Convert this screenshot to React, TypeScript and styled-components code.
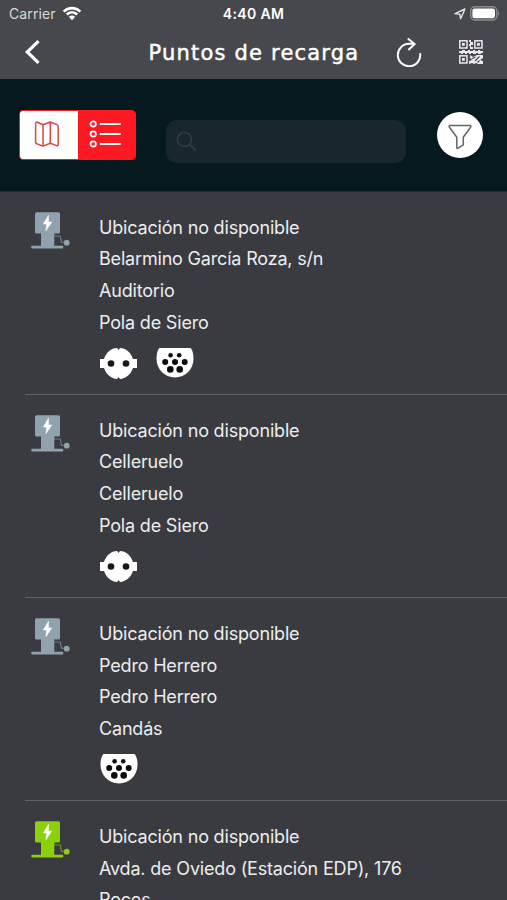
import React from 'react';
import styled, { createGlobalStyle } from 'styled-components';

const GlobalStyle = createGlobalStyle`
  * { box-sizing: border-box; }
  body { margin: 0; background: #3a3b40; }
  svg { display: block; flex: none; }
`;

const Screen = styled.div`
  width: 507px;
  height: 900px;
  overflow: hidden;
  display: flex;
  flex-direction: column;
  background: #3a3b40;
  color: #ededee;
  font-family: Inter, sans-serif;
`;

const StatusBar = styled.div`
  height: 27px;
  flex: none;
  display: grid;
  grid-template-columns: 1fr auto 1fr;
  align-items: center;
  padding: 0 7px 0 9px;
  background: #47484d;
  font-size: 14px;
`;

const StatusGroup = styled.div<{ $end?: boolean }>`
  display: flex;
  align-items: center;
  gap: ${(p) => (p.$end ? 4 : 6)}px;
  justify-content: ${(p) => (p.$end ? 'flex-end' : 'flex-start')};
`;

const Carrier = styled.span`
  color: #d9d9db;
  letter-spacing: 0.12px;
`;

const Clock = styled.span`
  color: #fff;
  font-weight: 600;
  margin-right: 2px;
  letter-spacing: 0.35px;
`;

const NavBar = styled.header`
  height: 52px;
  flex: none;
  display: flex;
  align-items: center;
  padding: 0 24px 2px;
  background: #47484d;
`;

const Title = styled.h1`
  margin: 2px 0 0 108.5px;
  width: 246.5px;
  font: 400 21px/50px "DejaVu Sans", sans-serif;
  letter-spacing: 1.2px;
  -webkit-text-stroke: 0.45px #fff;
  white-space: nowrap;
  color: #fff;
`;

const BarButton = styled.button<{ $w: number; $gap?: number }>`
  width: ${(p) => p.$w}px;
  margin-left: ${(p) => p.$gap ?? 0}px;
  padding: 0;
  border: 0;
  background: none;
  flex: none;
`;

const Toolbar = styled.div`
  height: 113px;
  flex: none;
  display: flex;
  align-items: center;
  padding: 0 24px 0 19px;
  background: #06191e;
  border-bottom: 1px solid #25292f;
`;

const Segments = styled.div`
  display: flex;
  width: 117px;
  height: 50px;
  margin-top: -1px;
  border: 1px solid #fc1a22;
  border-radius: 4px;
  overflow: hidden;
`;

const Segment = styled.button<{ $active?: boolean }>`
  width: 58px;
  padding: 0 3px 1px 0;
  border: 0;
  display: flex;
  align-items: center;
  justify-content: center;
  background: ${(p) => (p.$active ? '#fc1a22' : '#fff')};
`;

const SearchField = styled.div`
  width: 240px;
  height: 43px;
  margin: 12px 0 0 30px;
  padding-left: 10px;
  display: flex;
  align-items: center;
  border-radius: 11px;
  background: #17272d;
`;

const FilterButton = styled.button`
  width: 46px;
  height: 46px;
  margin-left: 31px;
  padding: 3px 0 0;
  border: 0;
  border-radius: 50%;
  background: #fff;
  display: flex;
  align-items: center;
  justify-content: center;
`;

const List = styled.ul`
  list-style: none;
  margin: 0;
  padding: 0 0 0 25px;
`;

const Item = styled.li`
  height: 203.1px;
  display: flex;
  border-bottom: 1px solid #606166;
  padding: 19px 0 0 6px;
`;

const Details = styled.div`
  padding: 0.6px 0 0 29px;
`;

const Line = styled.p`
  margin: 0;
  font-size: 18px;
  line-height: 31.8px;
  letter-spacing: -0.18px;
  white-space: nowrap;
`;

const Sockets = styled.div`
  display: flex;
  gap: 19px;
  padding: 8.4px 0 0 1px;
`;

const Wifi = () => (
  <svg width="20" height="16" viewBox="0 0 20 16" fill="none" stroke="#fff" strokeWidth="2.7">
    <path d="M1.7 5.6C6.4 .9 13.6 .9 18.3 5.6" />
    <path d="M4.8 8.6C8 5.6 12 5.6 15.2 8.6" />
    <path d="M6.8 10.8Q10 8.2 13.2 10.8L10 14.2Z" fill="#fff" stroke="none" />
  </svg>
);

const Location = () => (
  <svg width="12" height="12" viewBox="0 0 12 12" fill="none" stroke="#e2e2e4" strokeWidth="1.4" strokeLinejoin="round">
    <path d="M1 5.6L11 1L6.6 10.8L5.8 6.2Z" />
  </svg>
);

const Battery = () => (
  <svg width="30" height="15" viewBox="0 0 30 15">
    <rect x="0.8" y="0.8" width="26" height="13.2" rx="4" fill="none" stroke="#8b8c90" strokeWidth="1.4" />
    <rect x="2.4" y="2.5" width="22.6" height="9.8" rx="2.2" fill="#fff" />
    <path d="M28 5Q30.3 7.4 28 9.8Z" fill="#8b8c90" />
  </svg>
);

const Back = () => (
  <svg width="16" height="26" viewBox="0 0 16 26" fill="none" stroke="#fff" strokeWidth="3.2">
    <path d="M14.5 2.2L3.3 13L14.5 23.8" />
  </svg>
);

const Reload = () => (
  <svg width="28" height="30" viewBox="0 0 28 30" fill="none" stroke="#fff" strokeWidth="2">
    <path d="M25.1 16.2A11.2 11.2 0 1 1 14 6.8H19.2" />
    <path d="M12.8 1.5L19.6 7L13.4 13" />
  </svg>
);

const qrFinders = [[0, 0], [15, 0], [0, 15]];

const Qr = () => (
  <svg width="24" height="24" viewBox="0 0 24 24" fill="#e9e9ea">
    {qrFinders.map(([x, y]) => (
      <g key={`${x}-${y}`} transform={`translate(${x} ${y})`}>
        <rect x="0.8" y="0.8" width="7.2" height="7.2" fill="none" stroke="#e9e9ea" strokeWidth="1.5" />
        <rect x="3" y="3" width="2.8" height="2.8" />
      </g>
    ))}
    <path d="M10 0h2v2h2v3h-2v2h2v2h-3V6h-1V4h1V2h-1zM0 11h3v-1h3v1h3v-1h2v1h3v-1h2v1h3v-1h2v1h3v2h-2v1h-3v-1h-2v1h-3v-1h-2v1h-2v-1h-2v1H6v-1H4v1H2v-1H0zM11 15l3 2l4-2h6v3l-3 2l3 1v3h-5l-2-1l-2 1l-2-1l-3 1v-3l3-1l-2-2z" />
    <path d="M12.5 19l4-2M16 21l4.5-4.5M18.5 22.5l2-2" stroke="#47484d" strokeWidth="1.1" />
  </svg>
);

const MapIcon = () => (
  <svg width="26" height="28" viewBox="0 0 26 28" fill="none" stroke="#d8483f" strokeWidth="1.5" strokeLinejoin="round">
    <path d="M2 3.6Q1.4 1.6 3.4 2.3L9 4.8L16.3 2L23 4.6Q24.2 5 24.2 6.4V24.4Q24.2 26.3 22.5 25.6L16.3 23.2L9 26.1L2.8 23.7Q1.6 23.2 1.6 22V3.4M9 4.8V26.1M16.3 2V23.2" />
  </svg>
);

const ListIcon = () => (
  <svg width="32" height="28" viewBox="0 0 32 28" fill="none" stroke="#fff" strokeWidth="1.8">
    {[4, 14, 24].map((y) => (
      <g key={y}>
        <circle cx="4.2" cy={y} r="2.7" />
        <path d={`M11.5 ${y}H31`} strokeLinecap="round" />
      </g>
    ))}
  </svg>
);

const SearchIcon = () => (
  <svg width="21" height="21" viewBox="0 0 21 21" fill="none" stroke="#2f3a40" strokeWidth="1.8" strokeLinecap="round">
    <circle cx="8.4" cy="8.4" r="7" />
    <path d="M13.6 13.6L19.3 19" strokeWidth="2.2" />
  </svg>
);

const Funnel = () => (
  <svg width="24" height="26" viewBox="0 0 24 26" fill="none" stroke="#66666a" strokeWidth="1.5" strokeLinejoin="round">
    <path d="M2.2 1.5H21.8Q23.1 1.5 22.7 3L15.3 13.3V20.8L9.7 24.4Q8.8 24.7 8.8 23.5V13.3L1.3 3Q.9 1.5 2.2 1.5Z" />
  </svg>
);

const Charger = ({ color }: { color: string }) => (
  <svg width="39" height="39" viewBox="0 0 39 39" fill={color}>
    <rect x="4" y="1.2" width="25" height="21.4" rx="1.6" />
    <path d="M10 22h13.3v12.8h8.2q.8 0 .8 1.3t-.8 1.3H1q-.8 0-.8-1.3t.8-1.3h9z" />
    <path d="M23 25h6.2l1.2 6.2h4.5" fill="none" stroke={color} strokeOpacity="0.65" strokeWidth="1.1" />
    <circle cx="35.7" cy="31.7" r="2.9" />
    <path d="M17.5 4.2L12.3 13h3.3l-.7 6.8L20.8 11h-3.3z" fill="#fff" stroke="#fff" strokeWidth="0.5" />
  </svg>
);

const Schuko = () => (
  <svg width="37" height="33" viewBox="0 0 37 33">
    <path d="M17 1L18.5 3L20 1C25.7 1.2 30.8 5.1 33 12H37V21H33C30.8 27.5 25.7 31.6 20 32L18.5 30L17 32C11.3 31.6 6.2 27.5 4 21H0V12H4C6.2 5.1 11.3 1.2 17 1Z" fill="#fff" />
    <circle cx="11" cy="16.5" r="3.3" fill="#17181b" />
    <circle cx="26" cy="16.5" r="3.3" fill="#17181b" />
  </svg>
);

const pins = [[14.6, 8.3, 2.3], [23.2, 8.3, 2.3], [9.2, 15, 3], [19, 15, 3], [28.7, 15, 3], [14.3, 22.4, 3.3], [23.7, 22.4, 3.3]];

const Mennekes = () => (
  <svg width="38" height="33" viewBox="0 0 38 33">
    <path d="M3.3 1H34.7Q37.5 4.5 37.5 11.6C37.5 22.5 29.5 30.4 19 30.4S.5 22.5.5 11.6Q.5 4.5 3.3 1Z" fill="#fff" />
    {pins.map(([x, y, r]) => <circle key={`${x}-${y}`} cx={x} cy={y} r={r} fill="#0c0d0f" />)}
  </svg>
);

type Station = { lines: string[]; sockets: string[]; color: string };

const stations: Station[] = [
  { lines: ['Ubicación no disponible', 'Belarmino García Roza, s/n', 'Auditorio', 'Pola de Siero'], sockets: ['schuko', 'mennekes'], color: '#90a2ad' },
  { lines: ['Ubicación no disponible', 'Celleruelo', 'Celleruelo', 'Pola de Siero'], sockets: ['schuko'], color: '#90a2ad' },
  { lines: ['Ubicación no disponible', 'Pedro Herrero', 'Pedro Herrero', 'Candás'], sockets: ['mennekes'], color: '#90a2ad' },
  { lines: ['Ubicación no disponible', 'Avda. de Oviedo (Estación EDP), 176', 'Roces'], sockets: [], color: '#8bd00b' },
];

export default function App() {
  return (
    <>
      <GlobalStyle />
      <Screen>
        <StatusBar>
          <StatusGroup><Carrier>Carrier</Carrier><Wifi /></StatusGroup>
          <Clock>4:40 AM</Clock>
          <StatusGroup $end><Location /><Battery /></StatusGroup>
        </StatusBar>
        <NavBar>
          <BarButton $w={16} aria-label="Volver"><Back /></BarButton>
          <Title>Puntos de recarga</Title>
          <BarButton $w={28} aria-label="Recargar"><Reload /></BarButton>
          <BarButton $w={24} $gap={36} aria-label="Escanear"><Qr /></BarButton>
        </NavBar>
        <Toolbar>
          <Segments>
            <Segment aria-label="Mapa"><MapIcon /></Segment>
            <Segment $active aria-label="Lista"><ListIcon /></Segment>
          </Segments>
          <SearchField><SearchIcon /></SearchField>
          <FilterButton aria-label="Filtrar"><Funnel /></FilterButton>
        </Toolbar>
        <List>
          {stations.map((station, i) => (
            <Item key={i}>
              <Charger color={station.color} />
              <Details>
                {station.lines.map((line, n) => <Line key={n}>{line}</Line>)}
                <Sockets>
                  {station.sockets.map((s) => (s === 'schuko' ? <Schuko key={s} /> : <Mennekes key={s} />))}
                </Sockets>
              </Details>
            </Item>
          ))}
        </List>
      </Screen>
    </>
  );
}
